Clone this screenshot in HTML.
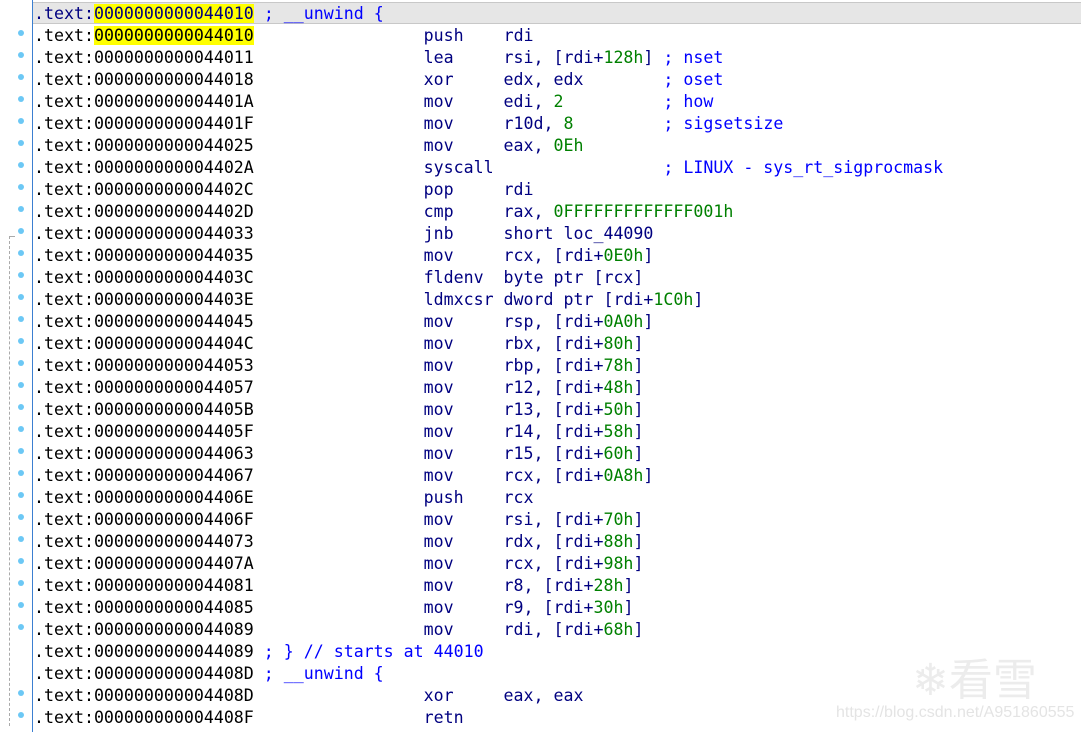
<!DOCTYPE html>
<html><head><meta charset="utf-8"><style>
body{margin:0;width:1081px;height:732px;background:#fff;overflow:hidden;position:relative;font-family:"Liberation Mono",monospace;}
.vl{position:absolute;left:32px;top:0;width:1px;height:732px;background:#3b7fd1;}
.hl0{position:absolute;left:33px;top:2px;width:1048px;height:22px;background:#e6e6e6;border-top:1px solid #c8c8c8;border-bottom:1px solid #c8c8c8;box-sizing:border-box;}
pre{position:absolute;left:34px;top:3px;margin:0;font-size:16.6px;line-height:22px;color:#000;}
.y{background:#ffff00;}
.n{color:#000080}.g{color:#008000}.c{color:#0000ff}
.dot{position:absolute;left:18px;width:6px;height:6px;border-radius:3px;background:#6cc8f5;}
.dash{position:absolute;border-color:#aaa;border-style:dashed;border-width:0;}
.wm{position:absolute;left:836px;top:704px;font-family:"Liberation Sans",sans-serif;font-size:16px;color:#e4e4e4;white-space:nowrap;}
.wm2{position:absolute;left:912px;top:648px;font-family:"Noto Sans CJK SC",sans-serif;font-size:44px;line-height:56px;color:#ececec;white-space:nowrap;}
</style></head><body>
<div class="hl0"></div>
<div class="vl"></div>
<div class="dash" style="left:9px;top:236px;width:6px;border-top-width:1px;"></div>
<div class="dash" style="left:9px;top:236px;height:490px;border-left-width:1px;"></div>
<pre><span class="n">.text:</span><span class="y n">0000000000044010</span> <span class="c">; __unwind {</span>
.text:<span class="y">0000000000044010</span>                 <span class="n">push    rdi</span>
.text:0000000000044011                 <span class="n">lea     rsi, [rdi+<span class="g">128h</span>]</span> <span class="c">; nset</span>
.text:0000000000044018                 <span class="n">xor     edx, edx</span>        <span class="c">; oset</span>
.text:000000000004401A                 <span class="n">mov     edi, <span class="g">2</span></span>          <span class="c">; how</span>
.text:000000000004401F                 <span class="n">mov     r10d, <span class="g">8</span></span>         <span class="c">; sigsetsize</span>
.text:0000000000044025                 <span class="n">mov     eax, <span class="g">0Eh</span></span>
.text:000000000004402A                 <span class="n">syscall</span>                 <span class="c">; LINUX - sys_rt_sigprocmask</span>
.text:000000000004402C                 <span class="n">pop     rdi</span>
.text:000000000004402D                 <span class="n">cmp     rax, <span class="g">0FFFFFFFFFFFFF001h</span></span>
.text:0000000000044033                 <span class="n">jnb     short loc_44090</span>
.text:0000000000044035                 <span class="n">mov     rcx, [rdi+<span class="g">0E0h</span>]</span>
.text:000000000004403C                 <span class="n">fldenv  byte ptr [rcx]</span>
.text:000000000004403E                 <span class="n">ldmxcsr dword ptr [rdi+<span class="g">1C0h</span>]</span>
.text:0000000000044045                 <span class="n">mov     rsp, [rdi+<span class="g">0A0h</span>]</span>
.text:000000000004404C                 <span class="n">mov     rbx, [rdi+<span class="g">80h</span>]</span>
.text:0000000000044053                 <span class="n">mov     rbp, [rdi+<span class="g">78h</span>]</span>
.text:0000000000044057                 <span class="n">mov     r12, [rdi+<span class="g">48h</span>]</span>
.text:000000000004405B                 <span class="n">mov     r13, [rdi+<span class="g">50h</span>]</span>
.text:000000000004405F                 <span class="n">mov     r14, [rdi+<span class="g">58h</span>]</span>
.text:0000000000044063                 <span class="n">mov     r15, [rdi+<span class="g">60h</span>]</span>
.text:0000000000044067                 <span class="n">mov     rcx, [rdi+<span class="g">0A8h</span>]</span>
.text:000000000004406E                 <span class="n">push    rcx</span>
.text:000000000004406F                 <span class="n">mov     rsi, [rdi+<span class="g">70h</span>]</span>
.text:0000000000044073                 <span class="n">mov     rdx, [rdi+<span class="g">88h</span>]</span>
.text:000000000004407A                 <span class="n">mov     rcx, [rdi+<span class="g">98h</span>]</span>
.text:0000000000044081                 <span class="n">mov     r8, [rdi+<span class="g">28h</span>]</span>
.text:0000000000044085                 <span class="n">mov     r9, [rdi+<span class="g">30h</span>]</span>
.text:0000000000044089                 <span class="n">mov     rdi, [rdi+<span class="g">68h</span>]</span>
.text:0000000000044089 <span class="c">; } // starts at 44010</span>
.text:000000000004408D <span class="c">; __unwind {</span>
.text:000000000004408D                 <span class="n">xor     eax, eax</span>
.text:000000000004408F                 <span class="n">retn</span></pre>
<div class="dot" style="top:30px"></div><div class="dot" style="top:52px"></div><div class="dot" style="top:74px"></div><div class="dot" style="top:96px"></div><div class="dot" style="top:118px"></div><div class="dot" style="top:140px"></div><div class="dot" style="top:162px"></div><div class="dot" style="top:184px"></div><div class="dot" style="top:206px"></div><div class="dot" style="top:228px"></div><div class="dot" style="top:250px"></div><div class="dot" style="top:272px"></div><div class="dot" style="top:294px"></div><div class="dot" style="top:316px"></div><div class="dot" style="top:338px"></div><div class="dot" style="top:360px"></div><div class="dot" style="top:382px"></div><div class="dot" style="top:404px"></div><div class="dot" style="top:426px"></div><div class="dot" style="top:448px"></div><div class="dot" style="top:470px"></div><div class="dot" style="top:492px"></div><div class="dot" style="top:514px"></div><div class="dot" style="top:536px"></div><div class="dot" style="top:558px"></div><div class="dot" style="top:580px"></div><div class="dot" style="top:602px"></div><div class="dot" style="top:624px"></div><div class="dot" style="top:690px"></div><div class="dot" style="top:712px"></div>
<div class="wm2">❄看雪</div>
<div class="wm">https://blog.csdn.net/A951860555</div>
</body></html>
